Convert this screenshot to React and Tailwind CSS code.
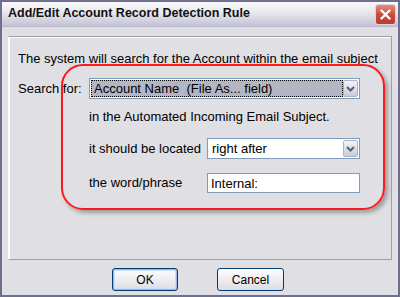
import React from 'react';

const Arrow = () => (
  <svg width="9" height="6" viewBox="0 0 9 6">
    <path d="M1 1 L4.5 4.5 L8 1" fill="none" stroke="#4d6185" strokeWidth="2" />
  </svg>
);

const DropButton = () => (
  <div className="w-[15px] h-full flex items-center justify-center bg-gradient-to-b from-[#f4f4f8] to-[#c9cbd8] border border-[#aab3c8] rounded-[2px]">
    <Arrow />
  </div>
);

const App = () => {
  return (
    <div
      className="relative w-[400px] h-[297px] bg-[#e0dfe3] border-2 border-[#6f6e8f] overflow-hidden text-black"
      style={{ fontFamily: '"Liberation Sans", Arial, sans-serif' }}
    >
      {/* TITLE BAR */}
      <div className="h-[27px] -mx-[2px] -mt-[2px] flex items-center justify-between pl-[8px] pr-[4px] bg-gradient-to-b from-[#fdfdfe] via-[#e6e6ee] to-[#c4c3d4] border-b border-[#b9b8cc]">
        <span className="text-[12.5px] font-bold text-[#111]">Add/Edit Account Record Detection Rule</span>
        <div className="w-[21px] h-[21px] mt-[2px] rounded-[3px] border border-[#d6d6de] bg-gradient-to-b from-[#e88a7a] via-[#cf4a3a] to-[#b83d30] flex items-center justify-center">
          <svg width="11" height="11" viewBox="0 0 11 11">
            <path d="M1.5 1.5 L9.5 9.5 M9.5 1.5 L1.5 9.5" stroke="white" strokeWidth="2.4" strokeLinecap="round" />
          </svg>
        </div>
      </div>

      {/* PANEL */}
      <div className="mx-[6px] mt-[9px] h-[224px] border border-t-[#a0a0a0] border-l-white border-r-[#a0a0a0] border-b-[#a0a0a0] shadow-[inset_1px_1px_0_#ffffff]">
        <div className="relative text-[13px] pl-[9px] pt-[14px]">
          <p className="leading-[15px]">The system will search for the Account within the email subject</p>

          <div className="flex items-center mt-[12px]">
            <span className="w-[71px]">Search for:</span>
            <div className="w-[271px] h-[21px] flex items-center bg-white border border-[#7f9db9] p-[1px]">
              <div className="flex-1 h-full bg-[#b4b6c4] border border-dotted border-black flex items-center pl-[2px] leading-none whitespace-pre">
                Account Name  (File As... field)
              </div>
              <DropButton />
            </div>
          </div>

          <p className="ml-[71px] mt-[10px] leading-[15px]">in the Automated Incoming Email Subject.</p>

          <div className="flex items-center mt-[14px]">
            <span className="ml-[71px] w-[118px]">it should be located</span>
            <div className="w-[153px] h-[21px] flex items-center bg-white border border-[#7f9db9] p-[1px]">
              <div className="flex-1 pl-[3px] leading-none">right after</div>
              <DropButton />
            </div>
          </div>

          <div className="flex items-center mt-[14px]">
            <span className="ml-[71px] w-[118px]">the word/phrase</span>
            <div className="w-[153px] h-[20px] flex items-center bg-white border border-[#7f9db9] pl-[3px] leading-none">
              Internal:
            </div>
          </div>
        </div>
      </div>

      {/* BUTTONS */}
      <div className="flex justify-center gap-[39px] mt-[8px] pr-[4px]">
        <button className="w-[66px] h-[23px] rounded-[3px] border border-[#003c74] bg-gradient-to-b from-white to-[#dcdce4] shadow-[inset_0_0_0_1px_#9cb8e6,inset_0_0_0_2px_#cfdcf4] text-[12px]">
          OK
        </button>
        <button className="w-[67px] h-[23px] rounded-[3px] border border-[#003c74] bg-gradient-to-b from-white to-[#dcdce4] text-[12px]">
          Cancel
        </button>
      </div>

      {/* red annotation */}
      <div className="absolute left-[59px] top-[62px] w-[324px] h-[146px] rounded-[22px] border-2 border-[#ff1a1a] shadow-[3px_3px_4px_rgba(0,0,0,0.3)] pointer-events-none" />
    </div>
  );
};

export default App;
